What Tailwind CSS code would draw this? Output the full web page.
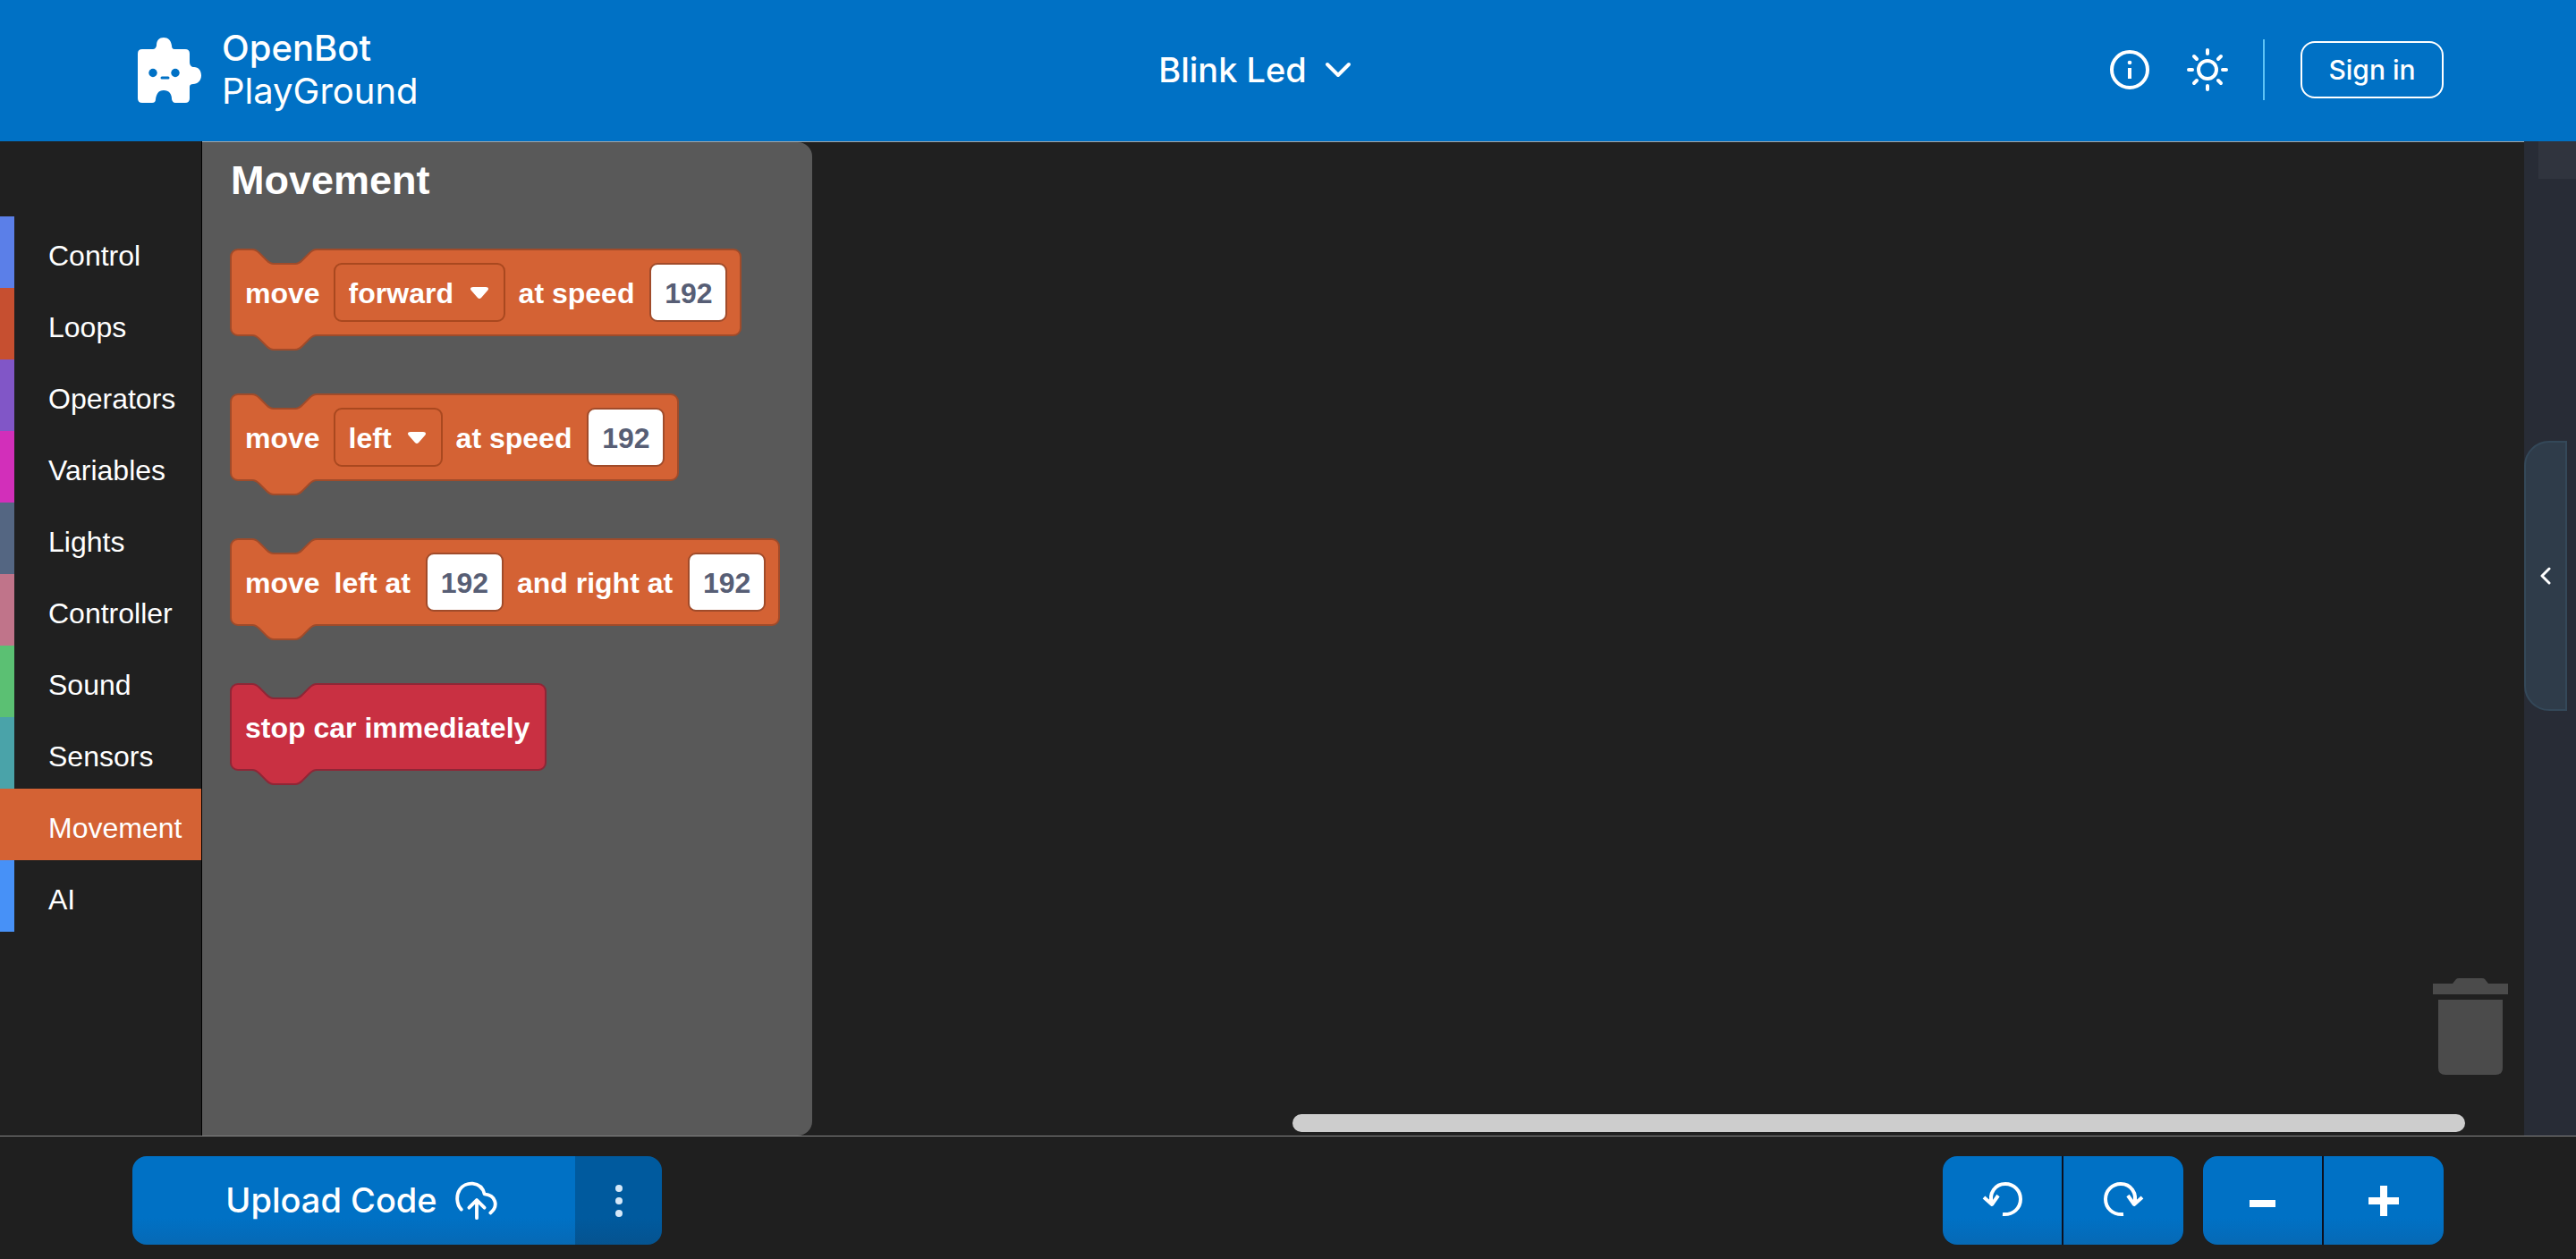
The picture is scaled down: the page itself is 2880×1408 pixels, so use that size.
<!DOCTYPE html>
<html lang="en">
<head>
<meta charset="utf-8">
<title>OpenBot PlayGround</title>
<script src="https://cdn.jsdelivr.net/npm/@tailwindcss/browser@4"></script>
</head>
<body class="flex min-h-screen flex-col bg-[#202020] font-['Liberation_Sans',Arial,sans-serif] text-white">

<header class="grid h-[158px] shrink-0 grid-cols-[1fr_auto_1fr] items-center bg-[#0071c5] pr-[148px] pb-[2px] pl-[154px] font-['Inter',sans-serif]">
  <a href="#" class="flex items-center gap-[22px]">
    <svg class="h-[75px] w-[72px]" viewBox="0 0 72 75" aria-hidden="true">
      <path fill="#fff" d="M5 14H17Q20 14 21 10C21 4 24 1 29 1C34 1 37 4 38 10Q38 14 41 14H53Q58 14 58 19V28C58 32 60 34 63 34C68 34 71 38 71 43.5C71 49 67 53 62 53Q58 53 58 56V69Q58 74 53 74H42Q39 74 38 70C38 64 35 60 29 60C23 60 21 64 20 70Q20 74 16 74H5Q0 74 0 69V19Q0 14 5 14Z"/>
      <circle cx="17" cy="40.500" r="4.700" fill="#0071c5"/><circle cx="42" cy="40.500" r="4.700" fill="#0071c5"/>
      <path d="M27 46h7" stroke="#0071c5" stroke-width="3" stroke-linecap="round"/>
    </svg>
    <span class="flex flex-col text-[40px] leading-12"><span class="font-medium">OpenBot</span><span>PlayGround</span></span>
  </a>
  <button type="button" class="flex items-center gap-5 pr-20 text-[38px] leading-12 font-medium">
    Blink Led
    <svg class="h-[18px] w-[30px]" viewBox="0 0 30 18" fill="none" stroke="#fff" stroke-width="4" stroke-linecap="round" stroke-linejoin="round" aria-hidden="true"><path d="M3 3L15 15L27 3"/></svg>
  </button>
  <div class="flex items-center justify-end">
    <button type="button" aria-label="Info" class="mr-10">
      <svg class="h-[46px] w-[46px]" viewBox="0 0 46 46" fill="none" stroke="#fff" aria-hidden="true"><circle cx="23" cy="23" r="20" stroke-width="4"/><path d="M23 21v12" stroke-width="4"/><circle cx="23" cy="15" r="2.300" fill="#fff" stroke="none"/></svg>
    </button>
    <button type="button" aria-label="Light theme" class="mr-[38px]">
      <svg class="h-12 w-12" viewBox="0 0 48 48" fill="none" stroke="#fff" stroke-width="4" stroke-linecap="round" aria-hidden="true"><circle cx="24" cy="24" r="10"/><path d="M24 2v4M24 42v4M3 24h4M41 24h4M9 9l3 3M36 36l3 3M39 9l-3 3M12 36l-3 3"/></svg>
    </button>
    <div class="mr-10 h-[68px] w-[2px] bg-[#5fc4f5]"></div>
    <button type="button" class="h-16 w-40 rounded-2xl border-2 border-white text-[30px] font-medium">Sign in</button>
  </div>
</header>

<main class="flex flex-1">
  <nav aria-label="Toolbox" class="w-[226px] shrink-0 border-r border-black pt-[84px] text-[32px]">
    <ul>
      <li><a href="#" class="flex h-20 items-center border-l-16 border-[#5b7fe8] pt-2 pl-[38px]">Control</a></li>
      <li><a href="#" class="flex h-20 items-center border-l-16 border-[#c64f30] pt-2 pl-[38px]">Loops</a></li>
      <li><a href="#" class="flex h-20 items-center border-l-16 border-[#8156c7] pt-2 pl-[38px]">Operators</a></li>
      <li><a href="#" class="flex h-20 items-center border-l-16 border-[#d22fba] pt-2 pl-[38px]">Variables</a></li>
      <li><a href="#" class="flex h-20 items-center border-l-16 border-[#546682] pt-2 pl-[38px]">Lights</a></li>
      <li><a href="#" class="flex h-20 items-center border-l-16 border-[#c0748a] pt-2 pl-[38px]">Controller</a></li>
      <li><a href="#" class="flex h-20 items-center border-l-16 border-[#5bc073] pt-2 pl-[38px]">Sound</a></li>
      <li><a href="#" class="flex h-20 items-center border-l-16 border-[#4aa3a9] pt-2 pl-[38px]">Sensors</a></li>
      <li><a href="#" aria-current="true" class="flex h-20 items-center border-l-16 border-[#d46234] bg-[#d46234] pt-2 pl-[38px]">Movement</a></li>
      <li><a href="#" class="flex h-20 items-center border-l-16 border-[#4791f7] pt-2 pl-[38px]">AI</a></li>
    </ul>
  </nav>

  <div class="flex flex-1 border-t border-[#a6a6a6]">
    <section class="w-[682px] shrink-0 rounded-r-2xl bg-[#595959] pt-4 pl-8 font-bold">
      <h2 class="text-[45px] leading-[54px]">Movement</h2>
      <div class="mt-[50px] flex flex-col items-start gap-[66px] text-[32px]">

        <div class="relative flex h-24 items-center gap-4 rounded-lg bg-[#d46234] px-4 outline-2 -outline-offset-1 outline-[#a04b2a]">
          <svg class="absolute -top-px left-6 h-[18px] w-[72px]" viewBox="0 -1 72 18" aria-hidden="true"><path d="M0 -1V0C4 0 6 2 8 4L16 12C18 14 20 16 24 16H48C52 16 54 14 56 12L64 4C66 2 68 0 72 0V-1Z" fill="#595959"/><path d="M0 0C4 0 6 2 8 4L16 12C18 14 20 16 24 16H48C52 16 54 14 56 12L64 4C66 2 68 0 72 0" fill="none" stroke="#a04b2a" stroke-width="2"/></svg>
          <svg class="absolute top-[94px] left-6 h-5 w-[72px]" viewBox="0 -2 72 20" aria-hidden="true"><path d="M0 -2V0C4 0 6 2 8 4L16 12C18 14 20 16 24 16H48C52 16 54 14 56 12L64 4C66 2 68 0 72 0V-2Z" fill="#d46234"/><path d="M0 0C4 0 6 2 8 4L16 12C18 14 20 16 24 16H48C52 16 54 14 56 12L64 4C66 2 68 0 72 0" fill="none" stroke="#a04b2a" stroke-width="2"/></svg>
          <span class="pt-[2px]">move</span>
          <span class="relative flex items-center">
            <select aria-label="Direction" class="h-16 w-[190px] appearance-none rounded-lg pt-[2px] pl-4 outline-2 -outline-offset-1 outline-[#a9481f]"><option>forward</option><option>backward</option></select>
            <svg class="pointer-events-none absolute right-[18px] h-[13px] w-5" viewBox="0 0 20 13" aria-hidden="true"><path d="M3 0H17Q20 0 20 2Q20 3 19 4L12 12Q10 14 8 12L1 4Q0 3 0 2Q0 0 3 0Z" fill="#fff"/></svg>
          </span>
          <span class="pt-[2px] pr-[2px]">at speed</span>
          <input aria-label="Speed" value="192" class="h-16 w-[85px] rounded-lg bg-white pt-[2px] text-center text-[#575e75] outline-2 -outline-offset-1 outline-[#a04b2a]">
        </div>

        <div class="relative flex h-24 items-center gap-4 rounded-lg bg-[#d46234] px-4 outline-2 -outline-offset-1 outline-[#a04b2a]">
          <svg class="absolute -top-px left-6 h-[18px] w-[72px]" viewBox="0 -1 72 18" aria-hidden="true"><path d="M0 -1V0C4 0 6 2 8 4L16 12C18 14 20 16 24 16H48C52 16 54 14 56 12L64 4C66 2 68 0 72 0V-1Z" fill="#595959"/><path d="M0 0C4 0 6 2 8 4L16 12C18 14 20 16 24 16H48C52 16 54 14 56 12L64 4C66 2 68 0 72 0" fill="none" stroke="#a04b2a" stroke-width="2"/></svg>
          <svg class="absolute top-[94px] left-6 h-5 w-[72px]" viewBox="0 -2 72 20" aria-hidden="true"><path d="M0 -2V0C4 0 6 2 8 4L16 12C18 14 20 16 24 16H48C52 16 54 14 56 12L64 4C66 2 68 0 72 0V-2Z" fill="#d46234"/><path d="M0 0C4 0 6 2 8 4L16 12C18 14 20 16 24 16H48C52 16 54 14 56 12L64 4C66 2 68 0 72 0" fill="none" stroke="#a04b2a" stroke-width="2"/></svg>
          <span class="pt-[2px]">move</span>
          <span class="relative flex items-center">
            <select aria-label="Turn" class="h-16 w-[120px] appearance-none rounded-lg pt-[2px] pl-4 outline-2 -outline-offset-1 outline-[#a9481f]"><option>left</option><option>right</option></select>
            <svg class="pointer-events-none absolute right-[18px] h-[13px] w-5" viewBox="0 0 20 13" aria-hidden="true"><path d="M3 0H17Q20 0 20 2Q20 3 19 4L12 12Q10 14 8 12L1 4Q0 3 0 2Q0 0 3 0Z" fill="#fff"/></svg>
          </span>
          <span class="pt-[2px] pr-[2px]">at speed</span>
          <input aria-label="Turn speed" value="192" class="h-16 w-[85px] rounded-lg bg-white pt-[2px] text-center text-[#575e75] outline-2 -outline-offset-1 outline-[#a04b2a]">
        </div>

        <div class="relative flex h-24 items-center gap-4 rounded-lg bg-[#d46234] px-4 outline-2 -outline-offset-1 outline-[#a04b2a]">
          <svg class="absolute -top-px left-6 h-[18px] w-[72px]" viewBox="0 -1 72 18" aria-hidden="true"><path d="M0 -1V0C4 0 6 2 8 4L16 12C18 14 20 16 24 16H48C52 16 54 14 56 12L64 4C66 2 68 0 72 0V-1Z" fill="#595959"/><path d="M0 0C4 0 6 2 8 4L16 12C18 14 20 16 24 16H48C52 16 54 14 56 12L64 4C66 2 68 0 72 0" fill="none" stroke="#a04b2a" stroke-width="2"/></svg>
          <svg class="absolute top-[94px] left-6 h-5 w-[72px]" viewBox="0 -2 72 20" aria-hidden="true"><path d="M0 -2V0C4 0 6 2 8 4L16 12C18 14 20 16 24 16H48C52 16 54 14 56 12L64 4C66 2 68 0 72 0V-2Z" fill="#d46234"/><path d="M0 0C4 0 6 2 8 4L16 12C18 14 20 16 24 16H48C52 16 54 14 56 12L64 4C66 2 68 0 72 0" fill="none" stroke="#a04b2a" stroke-width="2"/></svg>
          <span class="pt-[2px]">move</span>
          <label for="left-speed" class="pt-[2px] pr-[2px]">left at</label>
          <input id="left-speed" value="192" class="h-16 w-[85px] rounded-lg bg-white pt-[2px] text-center text-[#575e75] outline-2 -outline-offset-1 outline-[#a04b2a]">
          <label for="right-speed" class="pt-[2px] pr-[2px]">and right at</label>
          <input id="right-speed" value="192" class="h-16 w-[85px] rounded-lg bg-white pt-[2px] text-center text-[#575e75] outline-2 -outline-offset-1 outline-[#a04b2a]">
        </div>

        <div class="relative flex h-24 items-center rounded-lg bg-[#c93042] px-4 outline-2 -outline-offset-1 outline-[#8f2636]">
          <svg class="absolute -top-px left-6 h-[18px] w-[72px]" viewBox="0 -1 72 18" aria-hidden="true"><path d="M0 -1V0C4 0 6 2 8 4L16 12C18 14 20 16 24 16H48C52 16 54 14 56 12L64 4C66 2 68 0 72 0V-1Z" fill="#595959"/><path d="M0 0C4 0 6 2 8 4L16 12C18 14 20 16 24 16H48C52 16 54 14 56 12L64 4C66 2 68 0 72 0" fill="none" stroke="#8f2636" stroke-width="2"/></svg>
          <svg class="absolute top-[94px] left-6 h-5 w-[72px]" viewBox="0 -2 72 20" aria-hidden="true"><path d="M0 -2V0C4 0 6 2 8 4L16 12C18 14 20 16 24 16H48C52 16 54 14 56 12L64 4C66 2 68 0 72 0V-2Z" fill="#c93042"/><path d="M0 0C4 0 6 2 8 4L16 12C18 14 20 16 24 16H48C52 16 54 14 56 12L64 4C66 2 68 0 72 0" fill="none" stroke="#8f2636" stroke-width="2"/></svg>
          <span class="pt-[2px] pr-[2px]">stop car immediately</span>
        </div>
      </div>
    </section>

    <section aria-label="Workspace" class="flex flex-1 flex-col items-end justify-end pb-1">
      <svg class="mr-[18px] mb-11 h-[108px] w-[84px]" viewBox="0 0 84 108" fill="#4b4b4b" aria-label="Trash"><path d="M0 6H22L26 1Q27 0 29 0H55Q57 0 58 1L62 6H84V18H0Z"/><path d="M6 24H78V100Q78 108 70 108H14Q6 108 6 100Z"/></svg>
      <div class="mr-[66px] h-5 w-[1311px] rounded-full bg-[#cdcdcd]"></div>
    </section>
  </div>

  <aside class="flex w-[58px] shrink-0 flex-col items-end bg-[#282c36]">
    <div class="h-[42px] w-[42px] bg-[#30343e]"></div>
    <button type="button" aria-label="Open panel" class="mt-[293px] mr-[10px] flex h-[302px] w-12 items-center justify-center rounded-l-[28px] border-2 border-[#344859] bg-[#2f3c4a]">
      <svg class="h-5 w-3" viewBox="0 0 12 20" fill="none" stroke="#fff" stroke-width="3" stroke-linecap="round" stroke-linejoin="round" aria-hidden="true"><path d="M10 2L2 10L10 18"/></svg>
    </button>
  </aside>
</main>

<footer class="flex h-[138px] shrink-0 items-start justify-between border-t border-[#858585] bg-[#1f1f1f] px-[148px] pt-[22px]">
  <div class="flex h-[99px] overflow-hidden rounded-2xl font-['Inter',sans-serif]">
    <button type="button" class="flex w-[495px] items-center justify-center gap-5 bg-linear-to-b from-[#0071c5] from-70% to-[#0669b5] pl-[18px] text-[38px] font-medium">
      Upload Code
      <svg class="h-11 w-12" viewBox="-1 -2 50 46" fill="none" stroke="#fff" stroke-width="4" stroke-linecap="round" stroke-linejoin="round" aria-hidden="true"><path d="M6 31C0 25 0 14 4 8C10 -2 29 -3 33 13C46 14 50 27 40 35"/><path d="M24 41V21M15 29L24 20L33 29"/></svg>
    </button>
    <button type="button" aria-label="More options" class="flex w-[97px] items-center justify-center bg-linear-to-b from-[#005a9e] from-70% to-[#055390]">
      <svg class="h-9 w-2" viewBox="0 0 8 36" fill="#d5e8f8" aria-hidden="true"><circle cx="4" cy="4" r="4"/><circle cx="4" cy="18" r="4"/><circle cx="4" cy="32" r="4"/></svg>
    </button>
  </div>
  <div class="flex gap-[22px]">
    <div class="flex h-[99px] gap-[2px] overflow-hidden rounded-2xl bg-[#0b1020]">
      <button type="button" aria-label="Undo" class="flex w-[133px] items-center justify-center bg-linear-to-b from-[#0071c5] from-70% to-[#0669b5] pb-1">
        <svg class="h-10 w-[46px]" viewBox="0 0 46 40" fill="none" stroke="#fff" stroke-width="4" stroke-linejoin="round" aria-hidden="true"><path d="M11 26C7 13 15 3 26 3C36 3 43 11 43 20C43 30 35 38 23 37"/><path d="M2 18L11 26L18 16"/></svg>
      </button>
      <button type="button" aria-label="Redo" class="flex w-[134px] items-center justify-center bg-linear-to-b from-[#0071c5] from-70% to-[#0669b5] pb-1">
        <svg class="h-10 w-[46px]" viewBox="0 0 46 40" fill="none" stroke="#fff" stroke-width="4" stroke-linejoin="round" aria-hidden="true"><path d="M35 26C39 13 31 3 20 3C10 3 3 11 3 20C3 30 11 38 23 37"/><path d="M44 18L35 26L28 16"/></svg>
      </button>
    </div>
    <div class="flex h-[99px] gap-[2px] overflow-hidden rounded-2xl bg-[#0b1020]">
      <button type="button" aria-label="Zoom out" class="flex w-[133px] items-center justify-center bg-linear-to-b from-[#0071c5] from-70% to-[#0669b5]">
        <svg class="h-[34px] w-[34px]" viewBox="0 0 34 34" fill="#fff" aria-hidden="true"><path d="M2 16H31V24H2Z"/></svg>
      </button>
      <button type="button" aria-label="Zoom in" class="flex w-[134px] items-center justify-center bg-linear-to-b from-[#0071c5] from-70% to-[#0669b5]">
        <svg class="h-[34px] w-[34px]" viewBox="0 0 34 34" fill="#fff" aria-hidden="true"><path d="M13 0H21V13H34V21H21V34H13V21H0V13H13Z"/></svg>
      </button>
    </div>
  </div>
</footer>
</body>
</html>
